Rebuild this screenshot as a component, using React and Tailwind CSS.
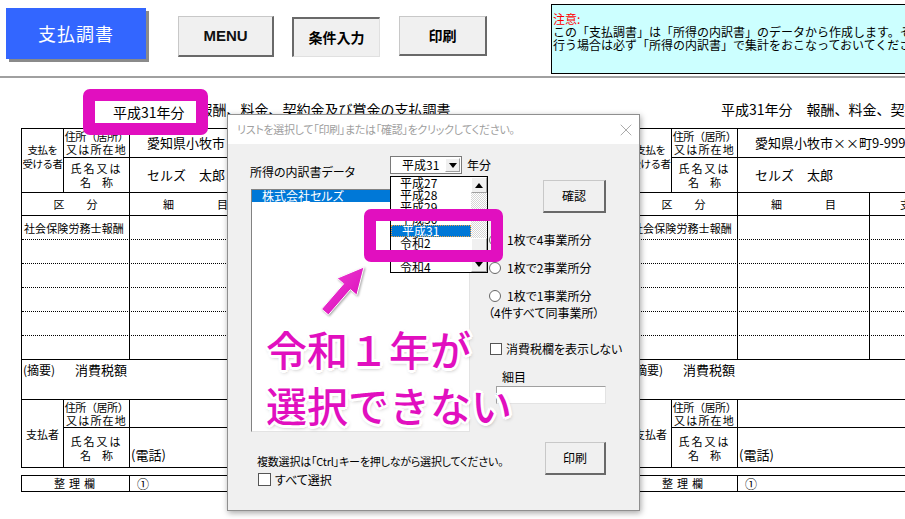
import React from "react";
import { X } from "lucide-react";

function Tri({ up }) {
  return (
    <svg width="8" height="5" viewBox="0 0 8 5">
      {up ? <polygon points="0,5 8,5 4,0" fill="#000" /> : <polygon points="0,0 8,0 4,5" fill="#000" />}
    </svg>
  );
}

function TopBar() {
  return (
    <div className="flex items-start h-[78px] border-b-2 border-[#a0a0a0] pl-[6px]">
      <div className="shrink-0 mt-[8px] w-[140px] h-[51px] bg-[#3366ff] shadow-[3px_3px_0_#8a8a8a] flex items-center justify-center text-white text-[18px] tracking-[1px]">
        支払調書
      </div>
      <div className="shrink-0 ml-[32px] mt-[16px] w-[96px] h-[41px] bg-[#f0f0f0] border border-[#c8c8c8] border-b-2 border-r-2 border-b-[#696969] border-r-[#696969] flex items-center justify-center font-['Liberation_Sans',sans-serif] font-bold text-[15px] text-[#111]">
        MENU
      </div>
      <div className="shrink-0 ml-[18px] mt-[17px] w-[88px] h-[40px] bg-[#f0f0f0] border-t-2 border-l-2 border-t-[#696969] border-l-[#696969] border-b border-r border-b-[#e0e0e0] border-r-[#e0e0e0] flex items-center justify-center font-bold text-[14px]">
        条件入力
      </div>
      <div className="shrink-0 ml-[19px] mt-[16px] w-[88px] h-[40px] bg-[#f0f0f0] border border-[#c8c8c8] border-b-2 border-r-2 border-b-[#696969] border-r-[#696969] flex items-center justify-center font-bold text-[14px]">
        印刷
      </div>
      <div className="shrink-0 ml-[64px] mt-[4px] w-[400px] h-[70px] border border-black bg-[#ccffff] pl-[1px] pt-[7px] text-[12px] leading-[13px] whitespace-nowrap overflow-hidden">
        <div className="text-[#ff0000]">注意:</div>
        <div>この「支払調書」は「所得の内訳書」のデータから作成します。その他の</div>
        <div>行う場合は必ず「所得の内訳書」で集計をおこなっておいてください。</div>
      </div>
    </div>
  );
}

function Page() {
  return (
    <div className="w-[590px] shrink-0">
      <div className="mt-[23px] h-[16px] pl-[92px] text-[14px] leading-[16px] whitespace-nowrap">
        平成31年分　報酬、料金、契約金及び賞金の支払調書
      </div>
      <div className="mt-[11px] border-x border-t border-black text-[11px] leading-[14px]">
        <div className="flex h-[64px] border-b border-black">
          <div className="w-[42px] shrink-0 border-r border-black flex flex-col items-center justify-center pb-[7px] text-[10.5px] tracking-[-0.5px]">
            <span>支払を</span>
            <span>受ける者</span>
          </div>
          <div className="flex-1 flex flex-col">
            <div className="flex h-[29px] border-b border-black">
              <div className="w-[66px] shrink-0 border-r border-black flex flex-col items-center justify-center leading-[13px]">
                <span className="tracking-[-0.4px]">住所（居所）</span>
                <span className="tracking-[1.2px]">又は所在地</span>
              </div>
              <div className="flex-1 pl-[17px] flex items-center text-[13px] whitespace-nowrap">愛知県小牧市××町9-999</div>
            </div>
            <div className="flex flex-1">
              <div className="w-[66px] shrink-0 border-r border-black flex flex-col items-center justify-center leading-[14px]">
                <span className="tracking-[2px]">氏名又は</span>
                <span>名　称</span>
              </div>
              <div className="flex-1 pl-[17px] flex items-center text-[13px] whitespace-nowrap">セルズ　太郎</div>
            </div>
          </div>
        </div>
        <div className="flex h-[23px] border-b border-black">
          <div className="w-[108px] shrink-0 border-r border-black flex items-center justify-center">区　　分</div>
          <div className="w-[132px] shrink-0 border-r border-black flex items-center justify-between px-[33px]">
            <span>細</span>
            <span>目</span>
          </div>
          <div className="w-[130px] shrink-0 border-r border-black flex items-center pl-[30px]">支　払　金　額</div>
          <div className="flex-1" />
        </div>
        {[0, 1, 2, 3, 4, 5].map((i) => (
          <div key={i} className={i < 5 ? "flex h-[24px] border-b border-dotted border-black" : "flex h-[24px] border-b border-black"}>
            <div className="w-[108px] shrink-0 border-r border-solid border-black flex items-center pl-[2px] tracking-[0.1px] whitespace-nowrap">
              {i === 0 ? "社会保険労務士報酬" : ""}
            </div>
            <div className="w-[132px] shrink-0 border-r border-solid border-black" />
            <div className="w-[130px] shrink-0 border-r border-solid border-black" />
            <div className="flex-1" />
          </div>
        ))}
        <div className="flex h-[40px] border-b border-black pt-[3px]">
          <span className="w-[53px] pl-[1px] text-[12px] leading-[14px]">(摘要)</span>
          <span className="text-[13px] leading-[14px]">消費税額</span>
        </div>
        <div className="flex h-[68px] border-b border-black">
          <div className="w-[42px] shrink-0 border-r border-black flex items-center justify-center">支払者</div>
          <div className="flex-1 flex flex-col">
            <div className="flex h-[28px] border-b border-black">
              <div className="w-[66px] shrink-0 border-r border-black flex flex-col items-center justify-center leading-[13px]">
                <span className="tracking-[-0.4px]">住所（居所）</span>
                <span className="tracking-[1.2px]">又は所在地</span>
              </div>
              <div className="flex-1" />
            </div>
            <div className="flex flex-1">
              <div className="w-[66px] shrink-0 border-r border-black flex flex-col items-center justify-center leading-[14px]">
                <span className="tracking-[2px]">氏名又は</span>
                <span>名　称</span>
              </div>
              <div className="flex-1 flex items-end pb-[4px] pl-[1px] text-[13px] leading-[16px]">(電話)</div>
            </div>
          </div>
        </div>
      </div>
      <div className="mt-[7px] flex h-[17px] border border-black text-[11px]">
        <div className="w-[108px] shrink-0 border-r border-black flex items-center justify-center tracking-[4px] pl-[2px]">整理欄</div>
        <div className="flex-1 flex items-center pl-[7px] text-[12px]">①</div>
      </div>
    </div>
  );
}

function Sheet() {
  return (
    <div className="flex pl-[21px] gap-[18px]">
      <Page />
      <Page />
    </div>
  );
}

function Radio({ label, mt }) {
  return (
    <div className={mt === 20 ? "flex items-center h-[14px] mt-[20px] ml-[1px]" : "flex items-center h-[14px] mt-[14px] ml-[1px]"}>
      <span className="w-[12px] h-[12px] shrink-0 rounded-full border border-[#666] bg-white" />
      <span className="ml-[6px] text-[12px] leading-[14px] whitespace-nowrap">{label}</span>
    </div>
  );
}

function Dialog() {
  return (
    <div className="absolute left-[227px] top-[114px] w-[413px] h-[397px] flex flex-col border border-[#8f8f8f] bg-[#f0f0f0] shadow-[1px_2px_6px_rgba(0,0,0,0.35)] [font-feature-settings:'palt']">
      <div className="h-[29px] shrink-0 bg-white flex items-center justify-between pl-[9px] pr-[3px]">
        <span className="text-[11px] tracking-[-0.3px] text-[#a0a0a0] whitespace-nowrap">リストを選択して「印刷」または「確認」をクリックしてください。</span>
        <X size={20} strokeWidth={1} color="#9a9a9a" />
      </div>
      <div className="flex-1 flex pl-[22px]">
        <div className="w-[220px] shrink-0 flex flex-col">
          <div className="mt-[12px] h-[18px] flex">
            <span className="w-[140px] shrink-0 mt-[9px] text-[12px] leading-[14px] whitespace-nowrap">所得の内訳書データ</span>
            <div className="w-[72px] h-[18px] shrink-0 flex border border-[#7a7a7a] bg-white">
              <span className="flex-1 pl-[11px] text-[12px] leading-[16px]">平成31</span>
              <span className="w-[15px] my-[1px] mr-[1px] bg-[#f0f0f0] border border-[#a0a0a0] border-t-white border-l-white flex items-center justify-center">
                <Tri />
              </span>
            </div>
            <span className="ml-[5px] shrink-0 text-[12px] leading-[18px] whitespace-nowrap">年分</span>
          </div>
          <div className="mt-[15px] ml-[1px] w-[219px] h-[243px] bg-white border border-[#828282] border-r-[#e3e3e3] border-b-[#e3e3e3]">
            <div className="h-[12px] bg-[#0078d7] text-white text-[12px] leading-[12px] pl-[10px] whitespace-nowrap">株式会社セルズ</div>
          </div>
          <div className="mt-[22px] pl-[7px] text-[11px] leading-[14px] tracking-[-0.2px] whitespace-nowrap">複数選択は「Ctrl」キーを押しながら選択してください。</div>
          <div className="mt-[5px] h-[13px] pl-[8px] flex items-center">
            <span className="w-[13px] h-[13px] shrink-0 border border-[#555] bg-white" />
            <span className="ml-[4px] text-[12px] leading-[14px] whitespace-nowrap">すべて選択</span>
          </div>
        </div>
        <div className="ml-[18px] w-[118px] shrink-0 flex flex-col">
          <div className="mt-[36px] ml-[55px] w-[63px] h-[33px] bg-[#f0f0f0] border border-[#c8c8c8] border-b-2 border-r-2 border-b-[#696969] border-r-[#696969] flex items-center justify-center text-[12px]">
            確認
          </div>
          <Radio label="1枚で4事業所分" mt={20} />
          <Radio label="1枚で2事業所分" mt={14} />
          <Radio label="1枚で1事業所分" mt={14} />
          <div className="mt-[3px] h-[14px] text-[12px] leading-[14px] whitespace-nowrap">（4件すべて同事業所）</div>
          <div className="mt-[22px] h-[14px] ml-[2px] flex items-center">
            <span className="w-[12px] h-[12px] shrink-0 border border-[#555] bg-white" />
            <span className="ml-[4px] text-[12px] leading-[14px] whitespace-nowrap">消費税欄を表示しない</span>
          </div>
          <div className="mt-[14px] ml-[14px] h-[14px] text-[12px] leading-[14px]">細目</div>
          <div className="mt-[2px] ml-[8px] w-[110px] h-[18px] bg-white border border-[#a0a0a0] border-r-[#e3e3e3] border-b-[#e3e3e3]" />
          <div className="mt-[38px] ml-[57px] w-[61px] h-[33px] bg-[#f0f0f0] border border-[#c8c8c8] border-b-2 border-r-2 border-b-[#696969] border-r-[#696969] flex items-center justify-center text-[12px]">
            印刷
          </div>
        </div>
      </div>
    </div>
  );
}

function Dropdown() {
  const items = ["平成27", "平成28", "平成29", "平成30", "平成31", "令和2", "令和3", "令和4"];
  return (
    <div className="absolute left-[390px] top-[176px] w-[98px] h-[97px] bg-white border border-black flex overflow-hidden">
      <div className="w-[80px] shrink-0 flex flex-col">
        {items.map((t, i) =>
          i === 4 ? (
            <div key={t} className="h-[12px] shrink-0 bg-[#0078d7] text-white border border-dotted border-[#e8a04a] text-[12px] leading-[10px] pl-[10px] whitespace-nowrap overflow-hidden">
              {t}
            </div>
          ) : (
            <div key={t} className="h-[12px] shrink-0 text-[12px] leading-[12px] pl-[9px] whitespace-nowrap overflow-hidden">
              {t}
            </div>
          )
        )}
      </div>
      <div className="w-[16px] shrink-0 flex flex-col">
        <div className="h-[16px] shrink-0 bg-[#f0f0f0] border border-[#a0a0a0] border-t-white border-l-white flex items-center justify-center">
          <Tri up />
        </div>
        <div className="flex-1 bg-[repeating-conic-gradient(#ffffff_0%_25%,#d6d6d6_0%_50%)] bg-[length:2px_2px] pt-[45px]">
          <div className="h-[14px] bg-[#f0f0f0] border border-[#a0a0a0] border-t-white border-l-white" />
        </div>
        <div className="h-[16px] shrink-0 bg-[#f0f0f0] border border-[#a0a0a0] border-t-white border-l-white flex items-center justify-center">
          <Tri />
        </div>
      </div>
    </div>
  );
}

function Annotations() {
  return (
    <>
      <div className="absolute left-[83px] top-[89px] w-[125px] h-[46px] border-[12px] border-[#e10fbf] rounded-[7px] bg-white flex items-center pl-[18px] text-[14px] whitespace-nowrap">
        平成31年分
      </div>
      <div className="absolute left-[364px] top-[209px] w-[139px] h-[53px] border-[12px] border-[#e10fbf] rounded-[7px]" />
      <svg className="absolute left-[315px] top-[260px] drop-shadow-[1px_1px_1px_rgba(0,0,0,0.35)]" width="55" height="60" viewBox="0 0 55 60">
        <defs>
          <linearGradient id="ag" x1="0" y1="0" x2="1" y2="1">
            <stop offset="0" stopColor="#f040d4" />
            <stop offset="1" stopColor="#d808b8" />
          </linearGradient>
        </defs>
        <polygon points="13.4,54.9 35.4,29.6 41.8,35.2 49,7 22.2,18.2 28.6,23.8 6.6,49.1" fill="url(#ag)" stroke="#ffffff" strokeWidth="1" strokeLinejoin="round" />
      </svg>
      <div className="absolute left-[266px] top-[320px] text-[41px] leading-[56px] font-medium text-[#e10fbf] whitespace-nowrap [text-shadow:0_0_2px_#fff,2px_2px_0_#fff,-2px_-2px_0_#fff,2px_-2px_0_#fff,-2px_2px_0_#fff,3px_0_0_#fff,-3px_0_0_#fff,0_3px_0_#fff,0_-3px_0_#fff,1px_2px_4px_rgba(0,0,0,0.45)]">
        <div>令和１年が</div>
        <div>選択できない</div>
      </div>
    </>
  );
}

export default function App() {
  return (
    <div className="relative w-[905px] h-[519px] overflow-hidden bg-white text-black font-['Noto_Sans_CJK_JP','Noto_Sans',sans-serif]">
      <TopBar />
      <Sheet />
      <Dialog />
      <Dropdown />
      <Annotations />
    </div>
  );
}
